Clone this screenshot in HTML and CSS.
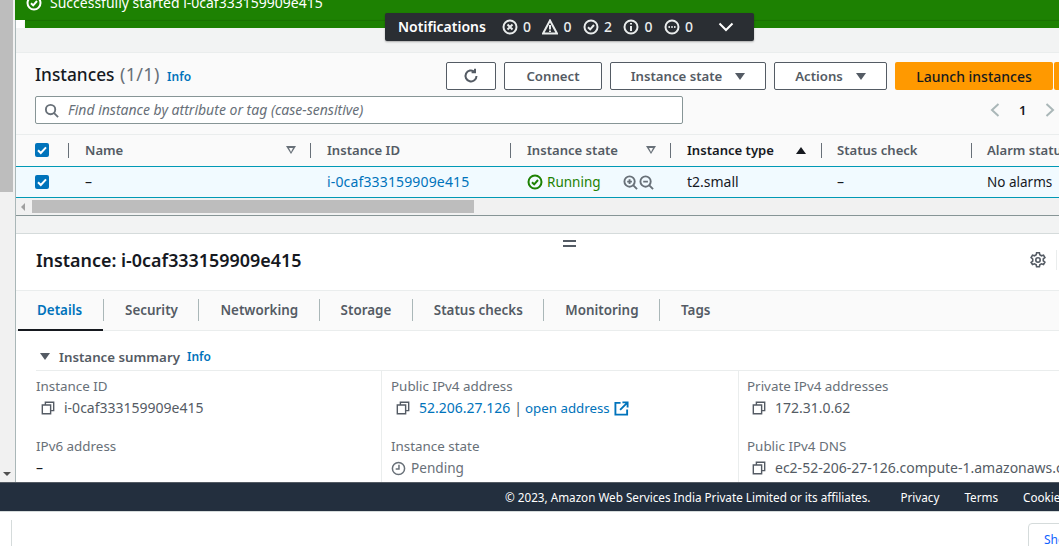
FILE: index.html
```html
<!DOCTYPE html>
<html lang="en">
  <head>
    <meta charset="UTF-8" />
    <title>Instances | EC2</title>
    <link rel="stylesheet" href="styles.css">
  </head>
  <body>
    <div class="app">
      <div class="page-scroll">
        <div class="page-thumb"></div>
        <div class="page-arrow"></div>
      </div>

      <main class="content">
        <div class="flash">
          <svg class="icon16" viewBox="0 0 16 16"><circle cx="8" cy="8" r="6.5"/><path d="M5 8.2l2.2 2.2L11 6"/></svg>
          <span>Successfully started i-0caf333159909e415</span>
        </div>
        <div class="flash-strip"></div>
        <div class="gap-top"></div>

        <section class="list-panel">
          <div class="list-title-row">
            <h1>Instances <span class="count">(1/1)</span> <a class="info">Info</a></h1>
            <div class="actions">
              <button class="btn btn-icon">
                <svg class="icon16" viewBox="0 0 16 16"><path d="M13.5 8a5.5 5.5 0 1 1-2-4.3"/><path d="M12 .8v3.4H8.6"/></svg>
              </button>
              <button class="btn btn-connect">Connect</button>
              <button class="btn btn-state">Instance state <i class="caret"></i></button>
              <button class="btn btn-actions">Actions <i class="caret"></i></button>
              <button class="btn-launch">Launch instances</button>
              <button class="btn-launch-more"></button>
            </div>
          </div>
          <div class="search-row">
            <div class="search">
              <svg class="search-icon" viewBox="0 0 16 16"><circle cx="7" cy="7" r="5"/><path d="M10.8 10.8L15 15"/></svg>
              <span>Find instance by attribute or tag (case-sensitive)</span>
            </div>
            <div class="pager">
              <svg class="chev" viewBox="0 0 10 16"><path d="M8.5 2L2 8l6.5 6"/></svg>
              <span>1</span>
              <svg class="chev" viewBox="0 0 10 16"><path d="M1.5 2L8 8l-6.5 6"/></svg>
            </div>
          </div>
        </section>

        <div class="table-row table-head">
          <div class="cell cell-check"><span class="checkbox"><svg viewBox="0 0 14 14"><path d="M3 7.2l2.8 2.8L11 4.4"/></svg></span></div>
          <div class="cell col-name"><span>Name</span><i class="filter"></i></div>
          <div class="cell col-id"><span>Instance ID</span></div>
          <div class="cell col-state"><span>Instance state</span><i class="filter"></i></div>
          <div class="cell col-type sorted"><span>Instance type</span><i class="sort-up"></i></div>
          <div class="cell col-status"><span>Status check</span></div>
          <div class="cell col-alarm"><span>Alarm status</span></div>
        </div>
        <div class="table-row table-body">
          <div class="cell cell-check"><span class="checkbox"><svg viewBox="0 0 14 14"><path d="M3 7.2l2.8 2.8L11 4.4"/></svg></span></div>
          <div class="cell col-name"><span>–</span></div>
          <div class="cell col-id"><a class="id-link">i-0caf333159909e415</a></div>
          <div class="cell col-state">
            <span class="running">
              <svg class="icon16" viewBox="0 0 16 16"><circle cx="8" cy="8" r="6.5"/><path d="M5 8.2l2.2 2.2L11 6"/></svg>
              Running
            </span>
            <span class="zooms">
              <svg viewBox="0 0 16 16"><circle cx="7" cy="7" r="5.5"/><path d="M11 11l4 4M4.5 7h5M7 4.5v5"/></svg>
              <svg viewBox="0 0 16 16"><circle cx="7" cy="7" r="5.5"/><path d="M11 11l4 4M4.5 7h5"/></svg>
            </span>
          </div>
          <div class="cell col-type"><span>t2.small</span></div>
          <div class="cell col-status"><span>–</span></div>
          <div class="cell col-alarm alarm-text"><span>No alarms</span></div>
        </div>
        <div class="h-scroll">
          <i class="h-arrow"></i>
          <div class="h-thumb"></div>
        </div>

        <div class="splitter"></div>

        <section class="detail">
          <div class="drag-handle"></div>
          <div class="detail-title">
            <h2>Instance: i-0caf333159909e415</h2>
            <svg class="gear" viewBox="0 0 16 16"><path d="M6.6 1.5h2.8l.4 2 1.7 1 2-.7 1.4 2.4-1.6 1.3v2l1.6 1.3-1.4 2.4-2-.7-1.7 1-.4 2H6.6l-.4-2-1.7-1-2 .7L1.1 11l1.6-1.3v-2L1.1 6.2l1.4-2.4 2 .7 1.7-1z" transform="translate(0 -.7)"/><circle cx="8" cy="8" r="2.2"/></svg>
            <div class="title-rule"></div>
          </div>
          <nav class="tabs">
            <a class="tab tab-on">Details</a>
            <a class="tab">Security</a>
            <a class="tab">Networking</a>
            <a class="tab">Storage</a>
            <a class="tab">Status checks</a>
            <a class="tab">Monitoring</a>
            <a class="tab tab-last">Tags</a>
          </nav>
          <div class="summary">
            <div class="summary-head"><i class="caret"></i><h3>Instance summary</h3><a class="info">Info</a></div>
            <div class="summary-grid">
              <div class="summary-col col-first">
                <div class="field">
                  <label>Instance ID</label>
                  <div class="value"><svg class="copy" viewBox="0 0 16 16"><path d="M5 4.5V1.5h9.5V11h-3"/><path d="M1.5 4.5H11V14.5H1.5z"/></svg>i-0caf333159909e415</div>
                </div>
                <div class="field">
                  <label>IPv6 address</label>
                  <div class="value value-plain">–</div>
                </div>
              </div>
              <div class="summary-col col-second">
                <div class="field">
                  <label>Public IPv4 address</label>
                  <div class="value"><svg class="copy" viewBox="0 0 16 16"><path d="M5 4.5V1.5h9.5V11h-3"/><path d="M1.5 4.5H11V14.5H1.5z"/></svg><a>52.206.27.126</a><span class="pipe">|</span><a class="open-link">open address</a>
                    <svg class="external" viewBox="0 0 16 16"><path d="M7 2H1.5v12.5H14V9"/><path d="M6.5 9.5L14 2M9 1.5h5.5V7"/></svg>
                  </div>
                </div>
                <div class="field">
                  <label>Instance state</label>
                  <div class="value pending"><svg class="clock" viewBox="0 0 16 16"><circle cx="8" cy="8" r="6.5"/><path d="M8.5 4v4.5H5"/></svg>Pending</div>
                </div>
              </div>
              <div class="summary-col col-third">
                <div class="field">
                  <label>Private IPv4 addresses</label>
                  <div class="value"><svg class="copy" viewBox="0 0 16 16"><path d="M5 4.5V1.5h9.5V11h-3"/><path d="M1.5 4.5H11V14.5H1.5z"/></svg>172.31.0.62</div>
                </div>
                <div class="field">
                  <label>Public IPv4 DNS</label>
                  <div class="value nowrap"><svg class="copy" viewBox="0 0 16 16"><path d="M5 4.5V1.5h9.5V11h-3"/><path d="M1.5 4.5H11V14.5H1.5z"/></svg>ec2-52-206-27-126.compute-1.amazonaws.com</div>
                </div>
              </div>
            </div>
          </div>
        </section>
      </main>

      <div class="notifications">
        <strong>Notifications</strong>
        <span class="note"><svg viewBox="0 0 16 16"><circle cx="8" cy="8" r="6.5"/><path d="M5.5 5.5l5 5M10.5 5.5l-5 5"/></svg>0</span>
        <span class="note"><svg viewBox="0 0 16 16"><path d="M8 1.5L15 14.5H1z"/><path d="M8 6v4.5M8 11.5v1.5"/></svg>0</span>
        <span class="note"><svg viewBox="0 0 16 16"><circle cx="8" cy="8" r="6.5"/><path d="M5 8.2l2.2 2.2L11 6"/></svg>2</span>
        <span class="note"><svg viewBox="0 0 16 16"><circle cx="8" cy="8" r="6.5"/><path d="M8 7v5M8 4v1.6"/></svg>0</span>
        <span class="note"><svg viewBox="0 0 16 16"><circle cx="8" cy="8" r="6.5"/><path d="M4.5 8h1.4M7.3 8h1.4M10.1 8h1.4"/></svg>0</span>
        <svg class="note-chev" viewBox="0 0 16 10"><path d="M1.5 1.5L8 8l6.5-6.5"/></svg>
      </div>
    </div>

    <footer class="footer">
      <span>© 2023, Amazon Web Services India Private Limited or its affiliates.</span>
      <a>Privacy</a>
      <a>Terms</a>
      <a>Cookie preferences</a>
    </footer>

    <div class="below">
      <div class="below-line"></div>
      <button class="show-btn">Show</button>
    </div>
  </body>
</html>
```
FILE: styles.css
```css
* {
  box-sizing: border-box;
}

html,
body {
  margin: 0;
  height: 546px;
  overflow: hidden;
}

body {
  background: #fff;
  color: #16191f;
  font-family: "Noto Sans", sans-serif;
  font-size: 14px;
  line-height: 20px;
}

a {
  color: #0073bb;
}

svg {
  fill: none;
  stroke: currentColor;
  stroke-width: 2;
  flex: none;
}

.icon16 {
  width: 16px;
  height: 16px;
}

.app {
  position: relative;
  display: flex;
  height: 483px;
  overflow: hidden;
  border-bottom: 1px solid #545b64;
}

/* left page scrollbar */
.page-scroll {
  width: 16px;
  flex: none;
  background: #f1f1f1;
  border-right: 1px solid #aab7b8;
  display: flex;
  flex-direction: column;
  justify-content: space-between;
}

.page-thumb {
  width: 13px;
  height: 192px;
  background: #bdbdbd;
}

.page-arrow {
  width: 0;
  height: 0;
  margin: 0 0 6px 3px;
  border-left: 4px solid transparent;
  border-right: 4px solid transparent;
  border-top: 4px solid #505050;
}

.content {
  width: 1043px;
  flex: none;
  background: #fff;
}

/* green banner */
.flash {
  height: 20px;
  margin-left: -1px;
  padding: 0 0 13px 11px;
  background: #1d8102;
  color: #fff;
  display: flex;
  align-items: flex-end;
  gap: 8px;
  overflow: hidden;
}

.flash span {
  margin-bottom: -6px;
}

.flash svg {
  margin-bottom: -4px;
}

.flash-strip {
  height: 8px;
  margin-left: 9px;
  background: #1d8102;
  border-top: 1px solid #1a7302;
  box-shadow: 0 1px 2px rgba(0, 0, 0, 0.15);
}

.gap-top {
  height: 24px;
  background: #f2f3f3;
}

/* instances header */
.list-panel {
  height: 82px;
  padding: 9px 0 0 19px;
  background: #fafafa;
  border-top: 1px solid #eaeded;
}

.list-title-row {
  display: flex;
  justify-content: space-between;
  height: 28px;
}

h1 {
  margin: 0;
  font-size: 17.3px;
  line-height: 25px;
  font-weight: 500;
}

.count {
  margin-left: 1px;
  color: #687078;
  font-weight: 400;
  font-size: 18px;
  letter-spacing: 0.3px;
}

.info {
  margin-left: 3px;
  font-size: 12px;
  font-weight: 600;
}

.actions {
  display: flex;
  gap: 8px;
  width: 613px;
  flex: none;
}

.btn {
  flex: none;
  height: 28px;
  background: #fff;
  border: 1px solid #545b64;
  border-radius: 2px;
  color: #545b64;
  font: 600 13.2px "Noto Sans", sans-serif;
  display: flex;
  align-items: center;
  justify-content: center;
  gap: 13px;
  padding: 0;
}

.btn-icon {
  width: 50px;
}

.btn-connect {
  width: 98px;
}

.btn-state {
  width: 156px;
}

.btn-actions {
  width: 113px;
}

.caret {
  width: 0;
  height: 0;
  border-left: 5.5px solid transparent;
  border-right: 5.5px solid transparent;
  border-top: 7px solid #545b64;
}

.btn-launch {
  flex: none;
  width: 158px;
  height: 28px;
  background: #ff9900;
  border: none;
  border-radius: 2px;
  color: #16191f;
  font: 500 14px "Noto Sans", sans-serif;
}

.btn-launch-more {
  flex: none;
  width: 6px;
  height: 28px;
  margin-left: -7px;
  background: #ff9900;
  border: none;
  border-radius: 2px 0 0 2px;
}

.search-row {
  display: flex;
  justify-content: space-between;
  margin-top: 6px;
}

.search {
  width: 648px;
  height: 28px;
  background: #fff;
  border: 1px solid #879596;
  border-radius: 2px;
  display: flex;
  align-items: center;
  gap: 9px;
  padding-left: 8px;
  color: #687078;
  font-style: italic;
}

.search-icon {
  width: 15px;
  height: 15px;
  color: #687078;
}

.pager {
  display: flex;
  align-items: center;
  gap: 19px;
  width: 69px;
  flex: none;
  font-weight: 600;
  font-size: 13px;
}

.chev {
  width: 10px;
  height: 16px;
  color: #aab7b8;
}

/* table */
.table-row {
  display: grid;
  grid-template-columns: 52px 242px 200px 160px 151px 150px 88px;
  overflow: hidden;
}

.table-head {
  height: 32px;
  padding-bottom: 1px;
  background: #fafafa;
  border-top: 1px solid #eaeded;
  font-size: 13.1px;
  font-weight: 600;
  color: #545b64;
}

.table-body {
  height: 32px;
  background: #f1faff;
  border-top: 1px solid #0099b5;
  border-bottom: 1px solid #0099b5;
}

.cell {
  display: flex;
  align-items: center;
  white-space: nowrap;
  min-width: 0;
  padding-left: 17px;
  position: relative;
}

.table-head .cell + .cell::before {
  content: "";
  position: absolute;
  left: 0;
  top: 8px;
  height: 15px;
  width: 1px;
  background: #687078;
}

.table-head .col-name::before {
  background: #eaeded;
}

.cell-check {
  padding-left: 19px;
}

.col-status,
.col-alarm {
  padding-left: 16px;
}

.table-head .col-name,
.table-head .col-state {
  justify-content: space-between;
  padding-right: 14px;
}

.table-head .col-type {
  justify-content: space-between;
  padding-right: 15px;
}

.sorted {
  color: #16191f;
}

.id-link {
  letter-spacing: 0.15px;
}

.alarm-text {
  font-size: 13.5px;
}

.checkbox {
  width: 14px;
  height: 14px;
  background: #0073bb;
  border-radius: 2px;
  display: block;
}

.checkbox svg {
  display: block;
  color: #fff;
  stroke-width: 2;
}

.filter {
  width: 0;
  height: 0;
  border-left: 5px solid transparent;
  border-right: 5px solid transparent;
  border-top: 8px solid #687078;
  position: relative;
}

.filter::after {
  content: "";
  position: absolute;
  left: -2.5px;
  top: -6.5px;
  border-left: 2.5px solid transparent;
  border-right: 2.5px solid transparent;
  border-top: 4px solid #fafafa;
}

.sort-up {
  width: 0;
  height: 0;
  border-left: 5.5px solid transparent;
  border-right: 5.5px solid transparent;
  border-bottom: 7px solid #16191f;
}

.running {
  display: flex;
  align-items: center;
  gap: 4px;
  color: #1d8102;
  font-size: 13.5px;
}

.zooms {
  display: flex;
  gap: 1px;
  margin-left: 22px;
  color: #687078;
}

.zooms svg {
  width: 15px;
  height: 15px;
}

.h-scroll {
  height: 18px;
  background: #f1f1f1;
  display: flex;
  align-items: center;
  border-bottom: 1px solid #879596;
}

.h-arrow {
  width: 0;
  height: 0;
  margin-left: 5px;
  border-top: 4px solid transparent;
  border-bottom: 4px solid transparent;
  border-right: 4px solid #a0a0a0;
}

.h-thumb {
  width: 442px;
  height: 13px;
  margin-left: 7px;
  background: #bdbdbd;
}

.splitter {
  height: 18px;
  background: #f2f3f3;
  border-bottom: 1px solid #d5dbdb;
}

/* bottom panel */
.detail {
  position: relative;
  background: #fff;
}

.drag-handle {
  position: absolute;
  left: 547px;
  top: 6px;
  width: 13px;
  height: 7px;
  border-top: 2px solid #545b64;
  border-bottom: 2px solid #545b64;
}

.detail-title {
  height: 57px;
  padding: 14px 0 0 20px;
  display: flex;
  align-items: flex-start;
  border-bottom: 1px solid #eaeded;
}

h2 {
  margin: 0;
  font-size: 17.9px;
  line-height: 24px;
  font-weight: 600;
  flex: 1;
}

.gear {
  margin-top: 4px;
  width: 16px;
  height: 16px;
  color: #545b64;
  stroke-width: 1.6;
}

.title-rule {
  width: 1px;
  height: 20px;
  margin: 2px 2px 0 10px;
  background: #eaeded;
}

.tabs {
  height: 40px;
  background: #fafafa;
  border-bottom: 1px solid #eaeded;
  padding: 8px 0 0 2px;
  display: flex;
}

.tab {
  padding: 0 20.5px 0 21px;
  color: #545b64;
  font-size: 13.4px;
  font-weight: 600;
  line-height: 22px;
  border-right: 1px solid #aab7b8;
  height: 22px;
}

.tab-on {
  position: relative;
  color: #0073bb;
  padding-left: 19px;
  padding-right: 21px;
}

.tab-on::after {
  content: "";
  position: absolute;
  left: 0;
  right: 0;
  top: 30px;
  height: 2px;
  background: #16191f;
}

.tab-last {
  border-right: none;
}

.summary {
  padding: 0 0 0 20px;
}

.summary-head {
  height: 40px;
  padding: 13px 0 0 4px;
  display: flex;
  align-items: center;
  gap: 8px;
  border-bottom: 1px solid #eaeded;
}

.summary-head .caret {
  border-left-width: 5px;
  border-right-width: 5px;
  margin-top: -1px;
  margin-right: 1px;
}

h3 {
  margin: 0;
  font-size: 13.3px;
  font-weight: 600;
  color: #545b64;
}

.summary-head .info {
  margin-left: -1px;
}

.summary-grid {
  display: grid;
  grid-template-columns: 346px 357px 337px;
  height: 113px;
  overflow: hidden;
}

.summary-col {
  border-right: 1px solid #eaeded;
  padding-top: 5px;
}

.col-second {
  padding-left: 9px;
}

.col-third {
  padding-left: 8px;
  border-right: none;
  overflow: hidden;
}

.field {
  height: 60px;
}

label {
  display: block;
  height: 20px;
  color: #687078;
  font-size: 13.4px;
}

.value {
  margin-top: 2px;
  display: flex;
  align-items: center;
  color: #545b64;
  white-space: nowrap;
  padding-left: 5px;
}

.value a {
  color: #0073bb;
}

.pipe {
  margin: 0 3px 0 4px;
}

.open-link {
  font-size: 13.3px;
}

.value-plain {
  padding-left: 0;
  color: #16191f;
}

.copy {
  width: 14px;
  height: 14px;
  margin-right: 9px;
  color: #545b64;
  stroke-width: 1.6;
}

.external {
  width: 15px;
  height: 15px;
  margin-left: 4px;
  color: #0073bb;
}

.pending {
  padding-left: 0;
  color: #687078;
  font-size: 13.6px;
}

.clock {
  width: 15px;
  height: 15px;
  margin-right: 5px;
  stroke-width: 1.6;
}

/* dark notification bar */
.notifications {
  position: absolute;
  left: 385px;
  top: 13px;
  width: 369px;
  height: 28px;
  background: #2a2e33;
  border-radius: 2px;
  color: #fff;
  display: flex;
  align-items: center;
  padding-left: 13px;
  box-shadow: 0 1px 2px rgba(0, 0, 0, 0.3);
  font-weight: 500;
}

.notifications strong {
  font-weight: 600;
  margin-right: 16px;
}

.note {
  display: flex;
  align-items: center;
  gap: 5px;
  margin-right: 11.5px;
  color: #eaeded;
}

.note svg {
  width: 16px;
  height: 16px;
  stroke-width: 2;
}

.note-chev {
  width: 16px;
  height: 10px;
  margin-left: 14px;
}

.footer {
  height: 29px;
  padding: 0 0 1px 505px;
  background: #232f3e;
  border-bottom: 1px solid #d5dbdb;
  color: #fff;
  font-size: 11.7px;
  display: flex;
  align-items: center;
  white-space: nowrap;
  overflow: hidden;
}

.footer a {
  color: #fff;
  margin-left: 30px;
}

.footer a + a {
  margin-left: 25px;
}

.below {
  height: 34px;
  position: relative;
  background: #fff;
  padding: 8px 0 0 11px;
}

.below-line {
  width: 1px;
  height: 28px;
  background: #d5dbdb;
}

.show-btn {
  position: absolute;
  left: 1028px;
  top: 11px;
  width: 60px;
  height: 30px;
  background: #fff;
  border: 1px solid #d5dbdb;
  border-radius: 4px;
  color: #0f62fe;
  font: 12px "Noto Sans", sans-serif;
  text-align: left;
  padding: 2px 0 0 15px;
}
```
